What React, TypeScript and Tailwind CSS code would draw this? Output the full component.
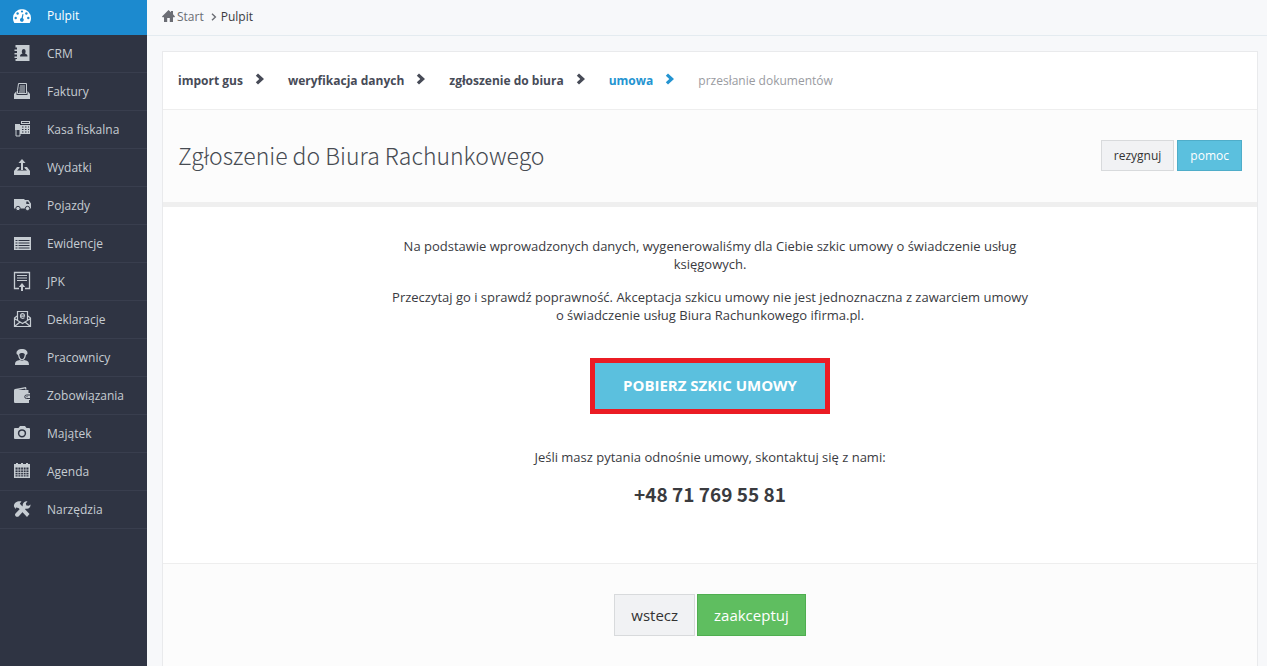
import React from 'react';
import type { ReactNode } from 'react';

type MenuItem = { label: string; icon: ReactNode };

const menu: MenuItem[] = [
  {
    label: 'CRM',
    icon: (
      <path
        fillRule="evenodd"
        d="M2.500 1H16.500v16H2.500v-2h1.500v-1H1.500v-1.500h2.500v-2H1.500V9h2.500V7H1.500V5.500h2.500V3.500H2.500zM7 12.500h7.500c0-2-1-2.500-2.500-3 1-1 1-4.500-1.250-4.500S8.500 8.500 9.500 9.500C8 10 7 10.500 7 12.500z"
      />
    ),
  },
  {
    label: 'Faktury',
    icon: (
      <>
        <path d="M1 12l2.500-3v4h11V9l2.500 3v5H1z" />
        <path d="M5.500 1.500h8v10h-9v-3z" fill="none" stroke="currentColor" />
        <path d="M7 4h5M6.500 6h5.500M6.500 8h5.500M6 10h6" stroke="currentColor" />
      </>
    ),
  },
  {
    label: 'Kasa fiskalna',
    icon: (
      <>
        <path d="M2 4h5v6H2z" />
        <path
          fillRule="evenodd"
          d="M8 1h9v3H8zM9 2v1h7V2zM7 5h10v9H7zM9 6.500v1h1.500v-1zm3 0v1h1.500v-1zm3 0v1h1v-1zM9 9v1h1.500V9zm3 0v1h1.500V9zm3 0v1h1V9zM9 11.500v1h1.500v-1zm3 0v1h1.500v-1zm3 0v1h1v-1z"
        />
        <path d="M3 9.500h4v6.500H3z" fill="#2f3443" stroke="currentColor" />
      </>
    ),
  },
  {
    label: 'Wydatki',
    icon: (
      <>
        <path d="M9 1l3.500 4H10v7H8V5H5.500z" />
        <path d="M4 9h2.500v1L4 12.500h10L11.500 10V9H14l3 4v4H1v-4z" />
      </>
    ),
  },
  {
    label: 'Pojazdy',
    icon: (
      <>
        <path fillRule="evenodd" d="M1 3h10.500v9.500H1zM12 4h3.500L18 7.500v5h-6.500V4zM13.300 5.500V8H16.500L15 5.500z" />
        <g stroke="#2f3443">
          <circle cx="5" cy="12.500" r="2.200" />
          <circle cx="14.500" cy="12.500" r="2.200" />
        </g>
      </>
    ),
  },
  {
    label: 'Ewidencje',
    icon: (
      <path
        fillRule="evenodd"
        d="M1 3h17v13H1zM2.500 6v1h2V6zm3 0v1h11V6zM2.500 8.500v1h2v-1zm3 0v1h11v-1zM2.500 11v1h2v-1zm3 0v1h11v-1zM2.500 13.500v1h2v-1zm3 0v1h11v-1z"
      />
    ),
  },
  {
    label: 'JPK',
    icon: (
      <>
        <path d="M6 16.500H1.500V.5h15v16H12" fill="none" stroke="currentColor" strokeWidth="1.300" />
        <path d="M4 3.500h10M4 6h10M4 8.500h10" stroke="currentColor" strokeWidth="1.200" />
        <path d="M9 11l3.200 4H10v4H8v-4H5.800z" />
      </>
    ),
  },
  {
    label: 'Deklaracje',
    icon: (
      <g fill="none" stroke="currentColor" strokeWidth="1.200">
        <path d="M4 6L1.500 8v8.500h16V8L15 6M1.500 8.500l5.500 3.500-5.500 4.500M17.500 8.500L12 12l5.500 4.500M7 12l2.500 1.500L12 12M4.500 10V1.500h10V10" />
        <path d="M7.500 6.200h4c0-3.500-4-3.500-4 0 0 2.500 3 2.500 4 1.500" />
      </g>
    ),
  },
  {
    label: 'Pracownicy',
    icon: (
      <>
        <path d="M2 17c0-4 2-4.500 5-5l2 1 2-1c3 .5 5 1 5 5z" />
        <path
          fillRule="evenodd"
          d="M3.500 5C3.500 2.500 6 1 9 1s5.500 1.500 5.500 4c0 1-.5 1.500-1.500 2-.5 3-2 5.500-4 5.500s-3.500-2.500-4-5.500c-1-.5-1.500-1-1.500-2zm2.700 1C6.400 9 7.500 11.200 9 11.200s2.600-2.200 2.800-5.200C10.500 4.500 7.500 4.500 6.200 6z"
        />
      </>
    ),
  },
  {
    label: 'Zobowiązania',
    icon: (
      <>
        <path d="M2 3L13 1l.6 2.500h-1.300l-.3-1L5 4h10.500v3H17v7h-1v3H2.500C1.500 17 1 16.500 1 15.500V4.500C1 3.700 1.300 3.200 2 3z" />
        <path d="M17 9h-3.500a1.600 1.600 0 000 3.500H17" fill="none" stroke="#2f3443" />
        <circle cx="14" cy="10.700" r=".6" fill="#2f3443" />
      </>
    ),
  },
  {
    label: 'Majątek',
    icon: (
      <>
        <path d="M2 4h3.500L7 2h5l1.500 2H16a1 1 0 011 1v9a1 1 0 01-1 1H2a1 1 0 01-1-1V5a1 1 0 011-1z" />
        <circle cx="9" cy="9.300" r="3.400" fill="none" stroke="#2f3443" strokeWidth="1.500" />
      </>
    ),
  },
  {
    label: 'Agenda',
    icon: (
      <>
        <path fillRule="evenodd" d="M1 2h2V1h2v1h3V1h2v1h3V1h2v1h2v14H1zM2.500 5.500v9h13v-9z" />
        <path d="M2 8h14M2 10.500h14M2 12.800h14M5 5v10M7.700 5v10M10.400 5v10M13 5v10" stroke="currentColor" strokeWidth=".8" />
      </>
    ),
  },
  {
    label: 'Narzędzia',
    icon: (
      <>
        <path d="M1 6.500C.5 3 4 .5 8.500 1.300L6.800 3.700 9 6l7.500 8-2.500 3-8.500-9-2.500-.5L2.500 9z" />
        <path d="M17.500 4.500c.3 3-2.200 4.800-4.700 4L6 16c-1.800 2.200-5.300-.3-3.500-2.500L9.700 6C9.300 3 11.500.8 14.500 1.200L12.800 3.400l.6 2.200 2.400.1z" />
      </>
    ),
  },
];

function Dashboard() {
  return (
    <svg viewBox="0 0 18 18" className="h-[18px] w-[18px] shrink-0" fill="currentColor" aria-hidden="true">
      <path d="M9 2a9 9 0 00-9 9c0 2 .5 3.500 1.300 5h15.400c.8-1.500 1.300-3 1.300-5a9 9 0 00-9-9z" />
      <g fill="#1c8acf">
        <circle cx="9" cy="4.500" r="1.100" />
        <circle cx="4.600" cy="6.500" r="1.200" />
        <circle cx="13.400" cy="6.500" r="1.200" />
        <circle cx="2.700" cy="11" r="1.200" />
        <circle cx="15.300" cy="11" r="1.200" />
        <path d="M9.500 7l1 .3-.7 3.900a1.900 1.900 0 11-1.300-.2z" />
      </g>
    </svg>
  );
}

function Chevron() {
  return (
    <svg viewBox="0 0 10 12" className="mb-[3px] h-3 w-[10px] shrink-0" fill="currentColor" aria-hidden="true">
      <path d="M3 .5L9 6l-6 5.500L.8 9.300 4.300 6 .8 2.700z" />
    </svg>
  );
}

const doneSteps = ['import gus', 'weryfikacja danych', 'zgłoszenie do biura'];

export default function App() {
  return (
    <div className="flex min-h-screen bg-[#f7f8fa] font-['Open_Sans','Noto_Sans',sans-serif] text-[13px] leading-[18px] text-[#3a3b3f]">
      <nav className="w-[147px] shrink-0 bg-[#2f3443]">
        <a href="#pulpit" className="flex h-[35px] items-center gap-4 bg-[#1c8acf] pb-1 pl-[13px] text-[12px] text-white">
          <Dashboard />
          Pulpit
        </a>
        {menu.map((item) => (
          <a
            key={item.label}
            href={`#${item.label}`}
            className="flex h-[38px] items-center gap-4 border-b border-[#393e4e] pl-[13px] text-[#c6ccd2]"
          >
            <svg viewBox="0 0 18 18" className="mb-px h-[18px] w-[18px] shrink-0 overflow-visible" fill="currentColor" aria-hidden="true">
              {item.icon}
            </svg>
            <span className="text-[12px]">{item.label}</span>
          </a>
        ))}
      </nav>

      <div className="flex min-w-0 flex-1 flex-col">
        <header className="flex h-9 items-center border-b border-[#e4ebf0] pb-0.5 pl-[15px] text-[12px]">
          <a href="#start" className="flex items-center gap-0.5 text-[#6b6d74]">
            <svg viewBox="0 0 13 13" className="h-[13px] w-[13px]" fill="currentColor" aria-hidden="true">
              <path d="M6.500 0L9 2.300V1h2v3.200l2 2.200-.5.900H11V12H7.800V8H5.200v4H2V7.300H.5L0 6.400z" />
            </svg>
            Start
          </a>
          <svg viewBox="0 0 6 8" className="mr-1 ml-[7px] h-2 w-1.5" fill="none" stroke="#6b6d74" strokeWidth="1.400" aria-hidden="true">
            <path d="M1 .8L4.400 4 1 7.200" />
          </svg>
          <span>Pulpit</span>
        </header>

        <main className="mt-[15px] mr-[9px] ml-[15px] flex flex-1 flex-col border border-b-0 border-[#e9eaec] bg-white">
          <ol className="flex h-[58px] items-center border-b border-[#eee] pl-[15px] text-[12px] font-bold text-[#474b57]">
            {doneSteps.map((step) => (
              <li key={step} className="mr-[23px] flex items-center gap-3">
                {step}
                <Chevron />
              </li>
            ))}
            <li className="mr-[23px] flex items-center gap-3 text-[#2494d1]" aria-current="step">
              umowa
              <Chevron />
            </li>
            <li className="font-normal text-[#999b9f]">przesłanie dokumentów</li>
          </ol>

          <div className="flex h-[97px] items-center justify-between border-b-[5px] border-[#efefef] bg-[#fcfcfc] px-[15px] pb-0.5">
            <h1 className="font-['Noto_Sans_CJK_JP','Open_Sans',sans-serif] text-[23px] leading-8 font-extralight text-[#474b52]">
              Zgłoszenie do Biura Rachunkowego
            </h1>
            <div className="flex gap-[3px] text-[12px]">
              <button className="h-[31px] border border-[#d8dadc] bg-[#f1f2f4] px-3 pt-0.5 text-[#333]">rezygnuj</button>
              <button className="h-[31px] border border-[#4fadc9] bg-[#5bc0de] px-3 pt-0.5 text-white">pomoc</button>
            </div>
          </div>

          <div className="flex h-[356px] flex-col items-center pt-[30px] text-center">
            <p>
              Na podstawie wprowadzonych danych, wygenerowaliśmy dla Ciebie szkic umowy o świadczenie usług
              <br />
              księgowych.
            </p>
            <p className="mt-[15px]">
              Przeczytaj go i sprawdź poprawność. Akceptacja szkicu umowy nie jest jednoznaczna z zawarciem umowy
              <br />o świadczenie usług Biura Rachunkowego ifirma.pl.
            </p>
            <button className="mt-[34px] h-14 border-[5px] border-[#eb1c24] bg-[#5bc0de] px-7 pb-0.5 text-[15px] font-bold text-white">
              POBIERZ SZKIC UMOWY
            </button>
            <p className="mt-[34px]">Jeśli masz pytania odnośnie umowy, skontaktuj się z nami:</p>
            <p className="mt-4 font-['Noto_Sans_CJK_JP','Open_Sans',sans-serif] text-[19px] leading-6 font-bold">+48 71 769 55 81</p>
          </div>

          <footer className="flex flex-1 items-start justify-center gap-0.5 border-t border-[#eee] bg-[#fcfcfc] pt-[30px] text-[15px]">
            <button className="h-[42px] border border-[#d8dadc] bg-[#f1f2f4] px-4 text-[#333]">wstecz</button>
            <button className="h-[42px] border border-[#4fae50] bg-[#5fbe60] px-4 text-white">zaakceptuj</button>
          </footer>
        </main>
      </div>
    </div>
  );
}
